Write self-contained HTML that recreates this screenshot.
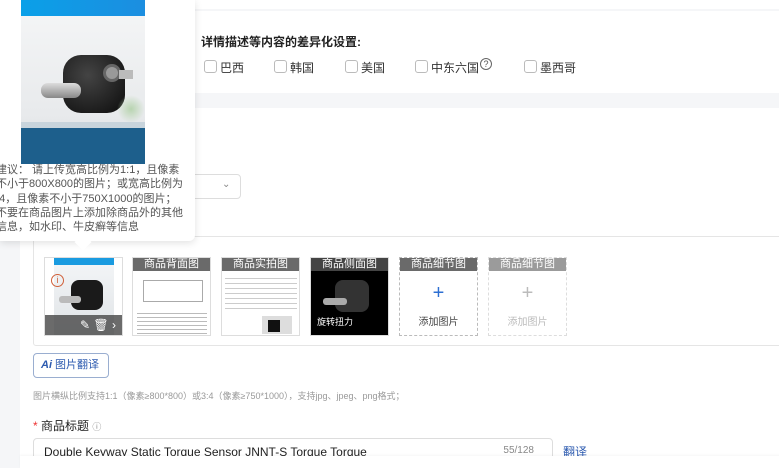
<!DOCTYPE html>
<html><head><meta charset="utf-8">
<style>
*{box-sizing:border-box;margin:0;padding:0}
body{width:779px;height:468px;overflow:hidden;background:#f5f6f8;font-family:"Liberation Sans","Noto Sans CJK SC",sans-serif;position:relative;color:#333}
.card{position:absolute;left:20px;right:0;background:#fff}
.abs{position:absolute}
.cb{position:absolute;width:13px;height:13px;border:1px solid #bbb;border-radius:3px;background:#fff}
.lbl{position:absolute;font-size:12px;color:#333}
.tile{position:absolute;top:257px;width:79px;height:79px;border:1px solid #ddd;overflow:hidden;background:#fff}
.tile .h{position:absolute;left:0;top:0;width:100%;height:13px;background:rgba(80,80,80,.85);color:#fff;font-size:11px;text-align:center;line-height:13px}
.dash{border:1px dashed #bbb}
</style></head><body>
<div class="card" style="top:0;height:9px"></div>
<div class="card" style="top:11px;height:82px"></div>
<div class="card" style="top:108px;height:360px"></div>

<div class="lbl" style="left:201px;top:33px;font-weight:bold;color:#222">详情描述等内容的差异化设置:</div>
<div class="cb" style="left:204px;top:60px"></div><div class="lbl" style="left:220px;top:59px">巴西</div>
<div class="cb" style="left:274px;top:60px"></div><div class="lbl" style="left:290px;top:59px">韩国</div>
<div class="cb" style="left:345px;top:60px"></div><div class="lbl" style="left:361px;top:59px">美国</div>
<div class="cb" style="left:415px;top:60px"></div><div class="lbl" style="left:431px;top:59px">中东六国</div>
<div class="abs" style="left:480px;top:58px;width:12px;height:12px;border:1px solid #666;border-radius:50%;font-size:9px;text-align:center;line-height:10px;color:#555">?</div>
<div class="cb" style="left:524px;top:60px"></div><div class="lbl" style="left:540px;top:59px">墨西哥</div>

<div class="abs" style="left:150px;top:174px;width:91px;height:25px;border:1px solid #ddd;border-radius:4px;background:#fff"></div>
<div class="abs" style="left:222px;top:179px;font-size:10px;color:#888">&#8964;</div>

<div class="abs" style="left:33px;top:236px;width:760px;height:110px;border:1px solid #e5e5e5;border-radius:3px"></div>

<div class="tile" style="left:44px">
 <div class="abs" style="left:9px;top:0;width:60px;height:7px;background:#1a9be0"></div>
 <div class="abs" style="left:9px;top:7px;width:60px;height:72px;background:linear-gradient(#f2f4f6,#dfe3e6)"></div>
 <div class="abs" style="left:26px;top:22px;width:32px;height:30px;background:#1a1a1a;border-radius:8px"></div>
 <div class="abs" style="left:14px;top:38px;width:22px;height:7px;background:#bbb;border-radius:3px"></div>
 <div class="abs" style="left:6px;top:16px;width:13px;height:13px;border:1px solid #d0603a;border-radius:50%;color:#d0603a;font-size:9px;text-align:center;line-height:11px">i</div>
 <div class="abs" style="left:0;top:57px;width:79px;height:22px;background:rgba(70,70,70,.8);color:#fff;font-size:12px;text-align:right;padding:3px 8px 0 0">✎ 🗑 ›</div>
</div>
<div class="tile" style="left:132px"><div class="h">商品背面图</div>
 <div class="abs" style="left:10px;top:22px;width:60px;height:22px;border:1px solid #aaa"></div>
 <div class="abs" style="left:4px;top:52px;width:70px;height:24px;background:repeating-linear-gradient(#fff 0 3px,#bbb 3px 4px)"></div></div>
<div class="tile" style="left:221px"><div class="h">商品实拍图</div>
 <div class="abs" style="left:3px;top:16px;width:72px;height:36px;background:repeating-linear-gradient(#fff 0 4px,#ccc 4px 5px)"></div>
 <div class="abs" style="left:40px;top:58px;width:30px;height:18px;background:#ddd"></div>
 <div class="abs" style="left:46px;top:62px;width:12px;height:12px;background:#111"></div></div>
<div class="tile" style="left:310px;background:#000"><div class="h">商品侧面图</div>
 <div class="abs" style="left:24px;top:22px;width:34px;height:32px;background:#333;border-radius:8px"></div>
 <div class="abs" style="left:12px;top:40px;width:24px;height:7px;background:#aaa;border-radius:3px"></div>
 <div class="abs" style="left:6px;top:57px;color:#fff;font-size:9px">旋转扭力</div></div>
<div class="tile dash" style="left:399px"><div class="h">商品细节图</div>
 <div class="abs" style="left:0;width:100%;top:24px;text-align:center;color:#2d6fd2;font-size:20px">+</div>
 <div class="abs" style="left:0;width:100%;top:55px;text-align:center;color:#444;font-size:10px">添加图片</div></div>
<div class="tile dash" style="left:488px;border-color:#ddd"><div class="h" style="background:rgba(130,130,130,.8)">商品细节图</div>
 <div class="abs" style="left:0;width:100%;top:24px;text-align:center;color:#bbb;font-size:20px">+</div>
 <div class="abs" style="left:0;width:100%;top:55px;text-align:center;color:#bbb;font-size:10px">添加图片</div></div>

<div class="abs" style="left:33px;top:353px;width:76px;height:25px;border:1px solid #9aaed0;border-radius:4px;font-size:11px;color:#2d5bb0;line-height:23px;padding-left:7px"><b style="font-style:italic">Ai</b> 图片翻译</div>
<div class="abs" style="left:33px;top:389px;font-size:9px;color:#999">图片横纵比例支持1:1（像素≥800*800）或3:4（像素≥750*1000），支持jpg、jpeg、png格式；</div>
<div class="abs" style="left:33px;top:417px;font-size:12px;color:#222"><span style="color:#e33">*</span> 商品标题 <span style="font-size:9px;color:#888">ⓘ</span></div>
<div class="abs" style="left:33px;top:438px;width:520px;height:30px;border:1px solid #ddd;border-radius:4px;font-size:12px;color:#222;padding:6px 0 0 10px">Double Keyway Static Torque Sensor JNNT-S Torque Torque<span class="abs" style="right:18px;top:6px;font-size:10px;color:#888">55/128</span></div>
<div class="abs" style="left:563px;top:443px;font-size:12px;color:#2d5bb0">翻译</div>
<div class="abs" style="left:20px;top:456px;width:760px;height:12px;background:#fff;box-shadow:0 -1px 2px rgba(0,0,0,.04)"></div>

<!-- tooltip -->
<div class="abs" style="left:0;top:0;width:195px;height:241px;background:#fff;border-radius:0 0 6px 0;box-shadow:0 2px 8px rgba(0,0,0,.12);overflow:hidden">
 <div class="abs" style="left:21px;top:0;width:124px;height:164px;overflow:hidden;background:linear-gradient(#f5f6f7 0%,#e8eaec 70%,#d8dcde 100%)">
  <div class="abs" style="left:0;top:0;width:124px;height:16px;background:linear-gradient(90deg,#0aa0e8,#1c8ee0)"></div>
  <div class="abs" style="left:0;top:127px;width:124px;height:37px;background:#1d5f8c"></div>
  <div class="abs" style="left:0;top:122px;width:124px;height:6px;background:#c8d4dc"></div>
  <div class="abs" style="left:42px;top:55px;width:62px;height:58px;background:radial-gradient(circle at 40% 35%,#444,#0c0c0c);border-radius:18px"></div>
  <div class="abs" style="left:82px;top:64px;width:18px;height:18px;background:#999;border-radius:50%;border:3px solid #666"></div>
  <div class="abs" style="left:20px;top:83px;width:40px;height:15px;background:linear-gradient(#ddd,#888);border-radius:7px"></div>
  <div class="abs" style="left:98px;top:70px;width:14px;height:9px;background:#bbb"></div>
  <div class="abs" style="left:96px;top:95px;width:28px;height:28px;background:radial-gradient(#b8d4b0,transparent 70%)"></div>
 </div>
 <div class="abs" style="left:-4px;top:163px;white-space:nowrap;font-size:11px;line-height:14.3px;color:#555">建议： 请上传宽高比例为1:1，且像素<br>不小于800X800的图片；或宽高比例为<br><span style="margin-left:-6px">3</span>:4，且像素不小于750X1000的图片；<br>不要在商品图片上添加除商品外的其他<br>信息，如水印、牛皮癣等信息</div>
</div>
<div class="abs" style="left:77px;top:236px;width:12px;height:12px;background:#fff;transform:rotate(45deg)"></div>
</body></html>
